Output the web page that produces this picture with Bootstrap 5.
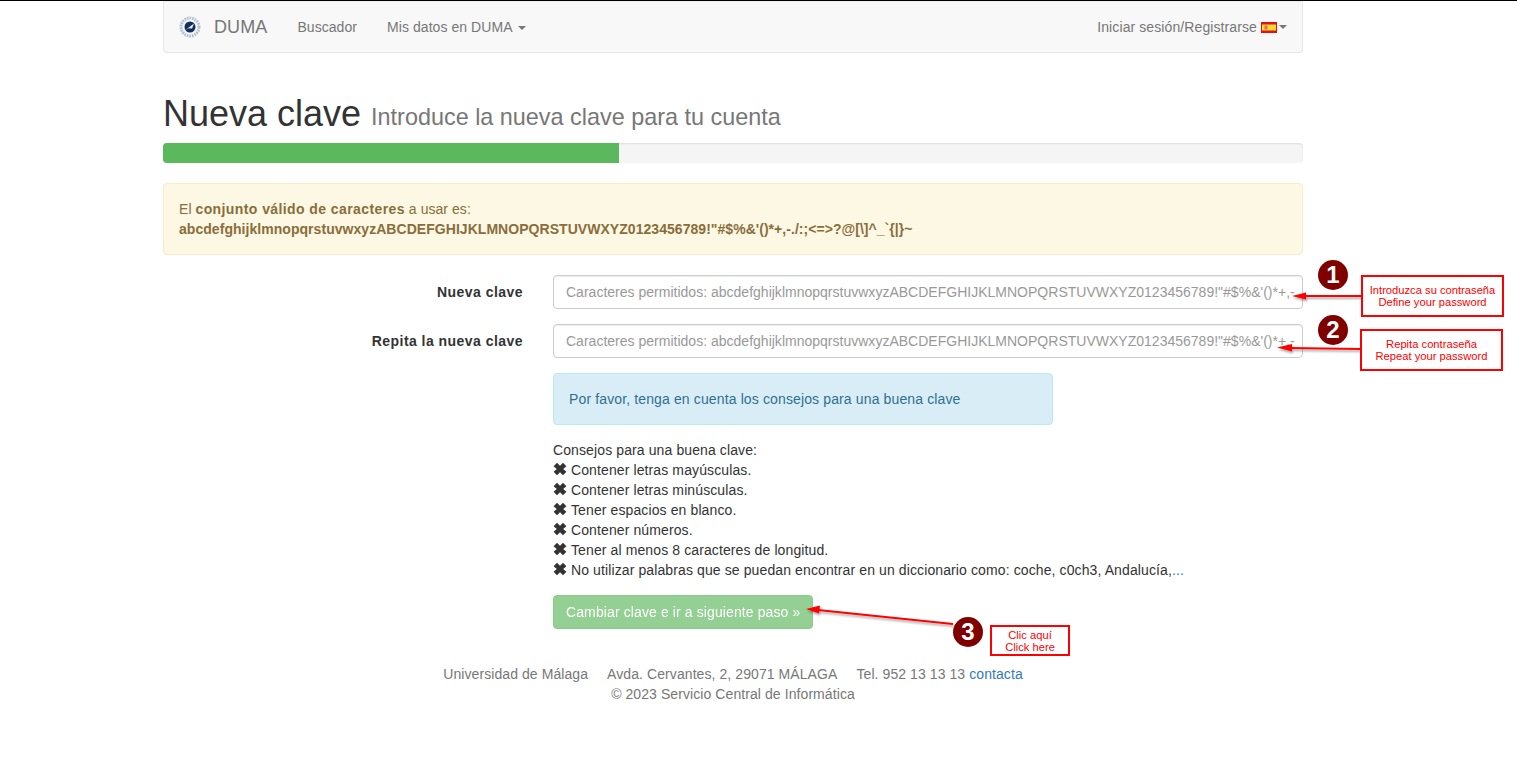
<!DOCTYPE html>
<html lang="es">
<head>
<meta charset="utf-8">
<title>DUMA</title>
<link rel="stylesheet" href="https://cdn.jsdelivr.net/npm/bootstrap@5.3.0/dist/css/bootstrap.min.css">
<style>
html,body{height:100%}
body{font-family:"Liberation Sans",Arial,sans-serif;font-size:14px;line-height:20px;color:#333;background:#fff;border-top:1px solid #000;position:relative;overflow:hidden}
.page-wrap{width:1140px;margin-left:163px}
.duma-nav{height:52px;background:#f8f8f8;border:1px solid #e7e7e7;border-top-color:#eee;border-radius:0 0 4px 4px;padding:0 15px;margin-bottom:40px}
.duma-nav a{color:#777;text-decoration:none;letter-spacing:.1px}
.duma-nav a.duma-link{letter-spacing:.06px}
.duma-brand{font-size:18px;margin-right:30px;gap:13px}
.duma-link{margin-right:30px}
.caret-mark{display:inline-block;width:0;height:0;margin-left:2px;vertical-align:middle;border-top:4px solid;border-right:4px solid transparent;border-left:4px solid transparent}
.page-title{font-size:36px;line-height:40px;font-weight:500;color:#333;margin:0 0 9px;padding-top:1px}
.page-title small{font-size:23.4px;line-height:1;font-weight:400;color:#777;position:relative;top:-1px}
.duma-progress{height:20px;background:#f5f5f5;border-radius:4px;margin:9px 0 20px;box-shadow:inset 0 1px 2px rgba(0,0,0,.1);overflow:hidden}
.duma-bar{background:#5cb85c}
.duma-alert{padding:15px;border:1px solid transparent;border-radius:4px;margin-bottom:20px}
.alert-warn{background:#fcf8e3;border-color:#faebcc;color:#8a6d3b}
.alert-warn .lead-bold{letter-spacing:.41px}
.alert-warn .lead-plain{letter-spacing:.05px}
.alert-warn .charset{letter-spacing:.045px}
.alert-note{background:#d9edf7;border-color:#bce8f1;color:#31708f;width:500px;margin-bottom:15px;letter-spacing:.13px}
.form-line{margin:0 -15px 15px}
.form-line>div{padding:0 15px}
.form-line label{font-weight:700;text-align:right;display:block;padding-top:7px;line-height:20px;letter-spacing:.46px}
.duma-input{display:block;width:100%;height:34px;padding:6px 6px 6px 12px;font-size:14px;line-height:20px;border:1px solid #ccc;border-radius:4px;font-family:inherit;box-shadow:inset 0 1px 1px rgba(0,0,0,.075);color:#555;background:#fff;letter-spacing:.01px}
.duma-input::placeholder{color:#999;opacity:1}
.tips-list{margin:0 0 15px;padding:0;list-style:none;letter-spacing:.11px}
.x-mark{width:14px;height:14px;display:inline-block;vertical-align:-1px;margin-right:4px;fill:#333}
.tips-list a,.foot-text a{color:#337ab7;text-decoration:none}
.duma-submit{display:inline-block;height:34px;padding:6px 12px;background:#5cb85c;border:1px solid #4cae4c;border-radius:4px;color:#fff;font-size:14px;line-height:20px;opacity:.65;font-family:inherit;letter-spacing:.11px}
.foot-text{text-align:center;color:#777;margin-top:35px;letter-spacing:.08px}
.foot-text .gap{margin:0 9.500px}
.annot{position:absolute;left:0;top:-1px;pointer-events:none}
.call-box{position:absolute;border:2px solid #f00;background:#fff;color:#f00;font-size:11.2px;line-height:12px;text-align:center;display:flex;flex-direction:column;justify-content:center;font-family:"Liberation Sans",Arial,sans-serif}
.cb1{left:1361px;top:274px;width:143px;height:42px}
.cb2{left:1360px;top:328px;width:143px;height:42px}
.cb3{left:990px;top:624px;width:80px;height:31px}
</style>
</head>
<body>
<div class="page-wrap">
  <nav class="duma-nav d-flex align-items-center justify-content-between">
    <div class="d-flex align-items-center">
      <a class="duma-brand d-flex align-items-center" href="#">
        <svg width="22" height="22" viewBox="0 0 22 22"><circle cx="11" cy="11" r="9" fill="none" stroke="#b4c2d6" stroke-width="3" stroke-dasharray="1.8 .8"/><circle cx="11" cy="11" r="5.500" fill="#12305f"/><path d="M6.800 13.800 15 7.500 13 12.500 9.800 12.300Z" fill="#eef2f7"/></svg>
        <span>DUMA</span>
      </a>
      <a class="duma-link" href="#">Buscador</a>
      <a class="duma-link" href="#">Mis datos en DUMA <span class="caret-mark"></span></a>
    </div>
    <a href="#" class="d-flex align-items-center">Iniciar sesión/Registrarse&nbsp;<svg width="16" height="11" viewBox="0 0 16 11"><rect width="16" height="11" fill="#e3101c"/><rect x="1" y="2.500" width="14" height="6" fill="#f2dc2e"/><rect x="3.500" y="3.500" width="3" height="4" fill="#d9705a"/></svg><span class="caret-mark"></span></a>
  </nav>

  <h1 class="page-title">Nueva clave <small>Introduce la nueva clave para tu cuenta</small></h1>
  <div class="duma-progress d-flex"><div class="duma-bar" style="width:40%"></div></div>

  <div class="duma-alert alert-warn"><span class="lead-plain">El</span> <b class="lead-bold">conjunto válido de caracteres</b> <span class="lead-plain">a usar es:</span><br><b class="charset">abcdefghijklmnopqrstuvwxyzABCDEFGHIJKLMNOPQRSTUVWXYZ0123456789!"#$%&amp;'()*+,-./:;&lt;=&gt;?@[\]^_`{|}~</b></div>

  <form>
    <div class="row g-0 form-line">
      <div class="col-4"><label for="k1">Nueva clave</label></div>
      <div class="col-8"><input id="k1" class="duma-input" type="text" placeholder="Caracteres permitidos: abcdefghijklmnopqrstuvwxyzABCDEFGHIJKLMNOPQRSTUVWXYZ0123456789!&quot;#$%&amp;'()*+,-./:;&lt;=&gt;?@[\]^_`{|}~"></div>
    </div>
    <div class="row g-0 form-line">
      <div class="col-4"><label for="k2">Repita la nueva clave</label></div>
      <div class="col-8"><input id="k2" class="duma-input" type="text" placeholder="Caracteres permitidos: abcdefghijklmnopqrstuvwxyzABCDEFGHIJKLMNOPQRSTUVWXYZ0123456789!&quot;#$%&amp;'()*+,-./:;&lt;=&gt;?@[\]^_`{|}~"></div>
    </div>
    <div class="row g-0 form-line mb-0">
      <div class="col-4"></div>
      <div class="col-8">
        <div class="duma-alert alert-note">Por favor, tenga en cuenta los consejos para una buena clave</div>
        <ul class="tips-list">
          <li>Consejos para una buena clave:</li>
          <li><svg class="x-mark" viewBox="0 0 14 14"><path d="M4 .8 7 3.800 10 .8 13.400 4.200 10.200 7 13.400 9.800 10 13.200 7 10.200 4 13.200 .6 9.800 3.800 7 .6 4.200Z"/></svg>Contener letras mayúsculas.</li>
          <li><svg class="x-mark" viewBox="0 0 14 14"><path d="M4 .8 7 3.800 10 .8 13.400 4.200 10.200 7 13.400 9.800 10 13.200 7 10.200 4 13.200 .6 9.800 3.800 7 .6 4.200Z"/></svg>Contener letras minúsculas.</li>
          <li><svg class="x-mark" viewBox="0 0 14 14"><path d="M4 .8 7 3.800 10 .8 13.400 4.200 10.200 7 13.400 9.800 10 13.200 7 10.200 4 13.200 .6 9.800 3.800 7 .6 4.200Z"/></svg>Tener espacios en blanco.</li>
          <li><svg class="x-mark" viewBox="0 0 14 14"><path d="M4 .8 7 3.800 10 .8 13.400 4.200 10.200 7 13.400 9.800 10 13.200 7 10.200 4 13.200 .6 9.800 3.800 7 .6 4.200Z"/></svg>Contener números.</li>
          <li><svg class="x-mark" viewBox="0 0 14 14"><path d="M4 .8 7 3.800 10 .8 13.400 4.200 10.200 7 13.400 9.800 10 13.200 7 10.200 4 13.200 .6 9.800 3.800 7 .6 4.200Z"/></svg>Tener al menos 8 caracteres de longitud.</li>
          <li><svg class="x-mark" viewBox="0 0 14 14"><path d="M4 .8 7 3.800 10 .8 13.400 4.200 10.200 7 13.400 9.800 10 13.200 7 10.200 4 13.200 .6 9.800 3.800 7 .6 4.200Z"/></svg>No utilizar palabras que se puedan encontrar en un diccionario como: coche, c0ch3, Andalucía,<a href="#">...</a></li>
        </ul>
        <button type="button" class="duma-submit">Cambiar clave e ir a siguiente paso »</button>
      </div>
    </div>
  </form>

  <div class="foot-text">Universidad de Málaga<span class="gap"></span>Avda. Cervantes, 2, 29071 MÁLAGA<span class="gap"></span>Tel. 952 13 13 13 <a href="#">contacta</a><br>© 2023 Servicio Central de Informática</div>
</div>

<svg class="annot" width="1517" height="762" viewBox="0 0 1517 762">
  <defs>
    <filter id="sh" x="-10%" y="-100%" width="120%" height="300%"><feDropShadow dx="1" dy="2" stdDeviation="1" flood-color="#000" flood-opacity=".35"/></filter>
  </defs>
  <g filter="url(#sh)" fill="#f00" stroke="#f00">
    <path d="M1362 296 1304 296" stroke-width="2" fill="none"/><path d="M1292 296 1306 292.500 1306 299.500Z" stroke="none"/>
    <path d="M1360 349 1290 348" stroke-width="2" fill="none"/><path d="M1277 347.500 1292 344 1292 351.500Z" stroke="none"/>
    <path d="M953 624 818 610" stroke-width="2" fill="none"/><path d="M806 609 820 605.500 819 613.500Z" stroke="none"/>
  </g>
  <g font-family="Liberation Sans,Arial,sans-serif" font-weight="700" font-size="24" text-anchor="middle" fill="#fff">
    <circle cx="1333" cy="275" r="15" fill="#800000"/><text x="1333" y="283">1</text>
    <circle cx="1333" cy="330" r="15" fill="#800000"/><text x="1333" y="338">2</text>
    <circle cx="968" cy="632" r="15" fill="#800000"/><text x="968" y="640">3</text>
  </g>
</svg>
<div class="call-box cb1"><span>Introduzca su contraseña</span><span>Define your password</span></div>
<div class="call-box cb2"><span>Repita contraseña</span><span>Repeat your password</span></div>
<div class="call-box cb3"><span>Clic aquí</span><span>Click here</span></div>
</body>
</html>
